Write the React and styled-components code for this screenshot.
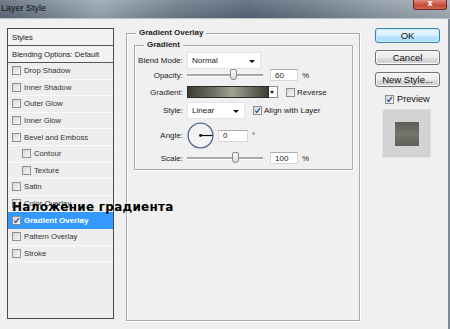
import React from 'react'
import styled, { createGlobalStyle } from 'styled-components'

const GlobalStyle = createGlobalStyle`
  html, body {
    margin: 0;
    padding: 0;
    background: #f0f0f0;
  }
  body {
    width: 450px;
    height: 329px;
    overflow: hidden;
  }
`

const styleItems = [
  { label: 'Drop Shadow' },
  { label: 'Inner Shadow' },
  { label: 'Outer Glow' },
  { label: 'Inner Glow' },
  { label: 'Bevel and Emboss' },
  { label: 'Contour', indent: true },
  { label: 'Texture', indent: true },
  { label: 'Satin' },
  { label: 'Color Overlay' },
  { label: 'Gradient Overlay', checked: true, active: true },
  { label: 'Pattern Overlay' },
  { label: 'Stroke' }
]

const Check = ({ checked }) => (
  <CheckBox>
    {checked && (
      <svg width="9" height="9" viewBox="0 0 9 9">
        <path d="M1.6 4.6 L3.6 7 L7.6 1.4" fill="none" stroke="#2c4d9c" strokeWidth="1.6" />
      </svg>
    )}
  </CheckBox>
)

const Slider = ({ value }) => (
  <SliderTrack>
    <SliderThumb style={{ left: `${value}%` }} />
  </SliderTrack>
)

const Dial = () => (
  <svg width="27" height="27" viewBox="0 0 27 27">
    <circle cx="13.5" cy="13.5" r="12.4" fill="#f3f3f3" stroke="#5a6a93" strokeWidth="1.4" />
    <line x1="13.5" y1="13.5" x2="25.5" y2="13.5" stroke="#111" strokeWidth="1.2" />
    <circle cx="13.5" cy="13.5" r="1.4" fill="#111" />
  </svg>
)

const App = () => {
  return (
    <Window>
      <GlobalStyle />
      <TitleBar>
        <Title>Layer Style</Title>
        <CloseButton>x</CloseButton>
      </TitleBar>
      <Client>
        <StylesPanel>
          <PanelHeader>Styles</PanelHeader>
          <PanelHeader>Blending Options: Default</PanelHeader>
          {styleItems.map(item => (
            <StyleItem key={item.label} $active={item.active} $indent={item.indent}>
              <Check checked={item.checked} />
              <span>{item.label}</span>
            </StyleItem>
          ))}
        </StylesPanel>

        <Main>
          <Group>
            <Legend>Gradient Overlay</Legend>
            <InnerGroup>
              <Legend>Gradient</Legend>
              <Row $h={20} $mt={4}>
                <Label>Blend Mode:</Label>
                <Select $w={74}>Normal</Select>
              </Row>
              <Row $h={10} $mt={0}>
                <Label>Opacity:</Label>
                <Slider value={60} />
                <NumberInput>60</NumberInput>
                <Unit>%</Unit>
              </Row>
              <Row $h={12} $mt={6}>
                <Label>Gradient:</Label>
                <GradientBar />
                <ArrowBox />
                <Option $ml={8}>
                  <Check />
                  <span>Reverse</span>
                </Option>
              </Row>
              <Row $h={16} $mt={4}>
                <Label>Style:</Label>
                <Select $w={58}>Linear</Select>
                <Option $ml={8}>
                  <Check checked />
                  <span>Align with Layer</span>
                </Option>
              </Row>
              <Row $h={27} $mt={4}>
                <Label>Angle:</Label>
                <Dial />
                <NumberInput $w={30} $ml={4}>0</NumberInput>
                <Unit>°</Unit>
              </Row>
              <Row $h={10} $mt={4}>
                <Label>Scale:</Label>
                <Slider value={63} />
                <NumberInput>100</NumberInput>
                <Unit>%</Unit>
              </Row>
            </InnerGroup>
          </Group>
        </Main>

        <Side>
          <Button $primary>OK</Button>
          <Button>Cancel</Button>
          <Button>New Style...</Button>
          <PreviewToggle>
            <Check checked />
            <span>Preview</span>
          </PreviewToggle>
          <Swatch>
            <SwatchInner />
          </Swatch>
        </Side>
      </Client>
      <Caption>Наложение градиента</Caption>
    </Window>
  )
}

const Window = styled('div')`
  position: relative;
  width: 450px;
  height: 329px;
  display: flex;
  flex-direction: column;
  font-family: 'Liberation Sans', Arial, sans-serif;
  color: #222;
  overflow: hidden;
`

const TitleBar = styled('div')`
  height: 18px;
  flex: none;
  display: flex;
  align-items: flex-start;
  background:
    linear-gradient(180deg, rgba(255, 255, 255, 0.12), rgba(0, 0, 0, 0.08)),
    linear-gradient(90deg, #5e6c7a 0%, #7d8b98 12%, #9aa7b2 22%, #6d7b89 40%, #56667a 55%, #6f7e8b 70%, #8e9ba6 85%, #a3adb6 100%);
  border-bottom: 1px solid #b7c1ca;
`

const Title = styled('div')`
  padding: 3px 0 0 1px;
  font-size: 9px;
  color: #111;
`

const CloseButton = styled('div')`
  margin-left: auto;
  margin-right: 3px;
  width: 32px;
  height: 9px;
  border: 1px solid #6e2a20;
  border-top: none;
  border-radius: 0 0 3px 3px;
  background: linear-gradient(180deg, #e08c78, #c4493a 60%, #d06a52);
  color: #fff;
  font-family: 'DejaVu Sans', sans-serif;
  font-weight: bold;
  font-size: 8px;
  line-height: 8px;
  text-align: center;
`

const Client = styled('div')`
  flex: 1;
  display: flex;
  align-items: flex-start;
  padding: 9px 0 0 7px;
  background: #f0f0f0;
  border-right: 2px solid #7e8b97;
`

const StylesPanel = styled('div')`
  box-sizing: border-box;
  width: 107px;
  height: 291px;
  flex: none;
  display: flex;
  flex-direction: column;
  border: 1px solid #4b4b4b;
  background: #eeeeee;
`

const PanelHeader = styled('div')`
  box-sizing: border-box;
  height: 17px;
  flex: none;
  display: flex;
  align-items: center;
  padding-left: 4px;
  font-size: 7.7px;
  color: #222;
  background: #f2f2f2;
  border-bottom: 1px solid #555;
`

const StyleItem = styled('div')`
  box-sizing: border-box;
  height: 16.6px;
  flex: none;
  display: flex;
  align-items: center;
  gap: 3px;
  padding-left: ${p => (p.$indent ? 14 : 4)}px;
  font-size: ${p => (p.$active ? 8 : 7.7)}px;
  font-weight: ${p => (p.$active ? 'bold' : 'normal')};
  color: ${p => (p.$active ? '#fff' : '#333')};
  background: ${p => (p.$active ? '#3399ff' : 'transparent')};
  border-bottom: 1px solid ${p => (p.$active ? '#3399ff' : '#fafafa')};
`

const CheckBox = styled('span')`
  box-sizing: border-box;
  width: 9px;
  height: 9px;
  flex: none;
  display: flex;
  align-items: center;
  justify-content: center;
  border: 1px solid #8e8f8f;
  background: linear-gradient(135deg, #d6d6d6, #f7f7f7);
  svg {
    display: block;
  }
`

const Main = styled('div')`
  width: 234px;
  margin: 5px 0 0 12px;
  flex: none;
`

const Group = styled('div')`
  position: relative;
  box-sizing: border-box;
  height: 288px;
  padding: 11px 6px 0 7px;
  border: 1px solid #a9a9a9;
  box-shadow: inset 1px 1px 0 #fff, 1px 1px 0 #fff;
`

const InnerGroup = styled('div')`
  position: relative;
  box-sizing: border-box;
  height: 125px;
  padding-top: 0;
  display: flex;
  flex-direction: column;
  border: 1px solid #a9a9a9;
  box-shadow: inset 1px 1px 0 #fff, 1px 1px 0 #fff;
`

const Legend = styled('div')`
  position: absolute;
  top: -6px;
  left: 9px;
  padding: 0 3px;
  background: #f0f0f0;
  font-size: 8px;
  font-weight: bold;
  line-height: 10px;
  color: #222;
`

const Row = styled('div')`
  height: ${p => p.$h}px;
  margin-top: ${p => p.$mt}px;
  flex: none;
  display: flex;
  align-items: center;
  font-size: 8px;
`

const Label = styled('div')`
  width: 48px;
  margin-right: 4px;
  flex: none;
  text-align: right;
  font-size: 8px;
  color: #222;
`

const Select = styled('div')`
  position: relative;
  box-sizing: border-box;
  width: ${p => p.$w}px;
  height: 17px;
  display: flex;
  align-items: center;
  padding-left: 4px;
  background: #fff;
  border: 1px solid #e4e4e4;
  font-size: 8px;
  color: #222;
  &::after {
    content: '';
    position: absolute;
    right: 5px;
    top: 7px;
    border-left: 3px solid transparent;
    border-right: 3px solid transparent;
    border-top: 3px solid #111;
  }
`

const SliderTrack = styled('div')`
  position: relative;
  width: 76px;
  height: 2px;
  flex: none;
  background: #a9a9a9;
  border-bottom: 1px solid #fff;
`

const SliderThumb = styled('div')`
  position: absolute;
  top: -5px;
  box-sizing: border-box;
  width: 7px;
  height: 11px;
  margin-left: -3px;
  border: 1px solid #8c8c8c;
  border-radius: 2px 2px 3px 3px;
  background: linear-gradient(180deg, #fdfdfd, #d9d9d9);
`

const NumberInput = styled('div')`
  box-sizing: border-box;
  width: ${p => p.$w || 28}px;
  height: 12px;
  margin-left: ${p => (p.$ml !== undefined ? p.$ml : 7)}px;
  flex: none;
  display: flex;
  align-items: center;
  padding-left: 4px;
  background: #fff;
  border: 1px solid #d5d7db;
  border-top-color: #abadb3;
  font-size: 8px;
  color: #222;
`

const Unit = styled('span')`
  margin-left: 4px;
  font-size: 8px;
  color: #222;
`

const GradientBar = styled('div')`
  box-sizing: border-box;
  width: 82px;
  height: 12px;
  flex: none;
  border: 1px solid #2a2a24;
  background: linear-gradient(90deg, #3c3c33 0%, #6c6c60 30%, #a3a395 55%, #6e6e62 78%, #3d3d34 100%);
`

const ArrowBox = styled('div')`
  position: relative;
  box-sizing: border-box;
  width: 9px;
  height: 12px;
  flex: none;
  background: #fff;
  border: 1px solid #8a8a8a;
  border-left: none;
  &::after {
    content: '';
    position: absolute;
    left: 1px;
    top: 4px;
    border-left: 2.5px solid transparent;
    border-right: 2.5px solid transparent;
    border-top: 3px solid #111;
  }
`

const Option = styled('div')`
  margin-left: ${p => p.$ml}px;
  display: flex;
  align-items: center;
  gap: 2px;
  font-size: 8px;
  color: #222;
`

const Side = styled('div')`
  width: 65px;
  margin-left: 15px;
  flex: none;
  display: flex;
  flex-direction: column;
`

const Button = styled('div')`
  box-sizing: border-box;
  height: 15px;
  margin-bottom: 7px;
  display: flex;
  align-items: center;
  justify-content: center;
  border: 1px solid ${p => (p.$primary ? '#3c7fb1' : '#707070')};
  border-radius: 3px;
  background: ${p =>
    p.$primary
      ? 'linear-gradient(180deg, #eaf6fd 0%, #d9f0fc 50%, #bee6fd 51%, #a7d9f5 100%)'
      : 'linear-gradient(180deg, #f2f2f2 0%, #ebebeb 50%, #dddddd 51%, #cfcfcf 100%)'};
  box-shadow: inset 0 0 0 1px ${p => (p.$primary ? '#c6eefd' : '#fcfcfc')};
  font-size: 9.5px;
  color: #111;
`

const PreviewToggle = styled('div')`
  height: 10px;
  margin: 0 0 0 10px;
  display: flex;
  align-items: center;
  gap: 3px;
  font-size: 9.2px;
  color: #111;
`

const Swatch = styled('div')`
  box-sizing: border-box;
  width: 49px;
  height: 49px;
  margin: 5px 0 0 7px;
  display: flex;
  align-items: center;
  justify-content: center;
  background: #d3d3d3;
  border: 1px solid #e2e2e2;
`

const SwatchInner = styled('div')`
  width: 24px;
  height: 24px;
  background: linear-gradient(180deg, #5c5d55, #74756c 50%, #5e5f57);
`

const Caption = styled('div')`
  position: absolute;
  left: 12px;
  top: 200px;
  font-family: 'DejaVu Sans', sans-serif;
  font-weight: bold;
  font-size: 12px;
  letter-spacing: 0.25px;
  color: #000;
`

export default App
